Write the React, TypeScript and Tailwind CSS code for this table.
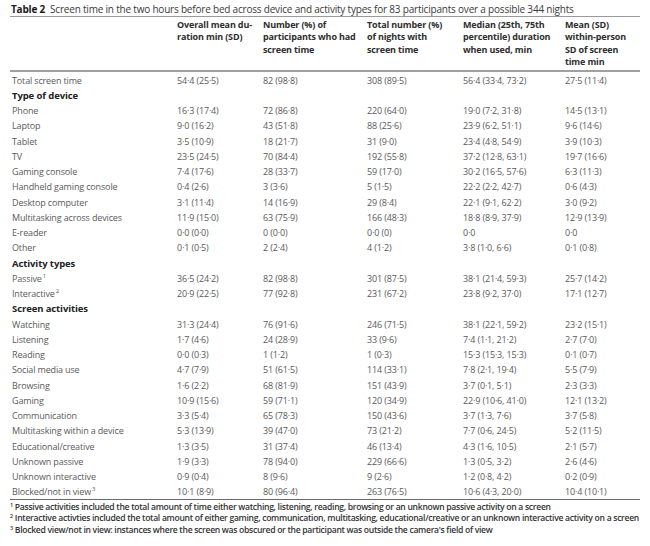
import React from 'react';

type Row =
  | { kind: 'section'; label: string }
  | { kind: 'data'; label: string; sup?: string; cells: string[] };

const rows: Row[] = [
  { kind: 'data', label: 'Total screen time', cells: ['54·4 (25·5)', '82 (98·8)', '308 (89·5)', '56·4 (33·4, 73·2)', '27·5 (11·4)'] },
  { kind: 'section', label: 'Type of device' },
  { kind: 'data', label: 'Phone', cells: ['16·3 (17·4)', '72 (86·8)', '220 (64·0)', '19·0 (7·2, 31·8)', '14·5 (13·1)'] },
  { kind: 'data', label: 'Laptop', cells: ['9·0 (16·2)', '43 (51·8)', '88 (25·6)', '23·9 (6·2, 51·1)', '9·6 (14·6)'] },
  { kind: 'data', label: 'Tablet', cells: ['3·5 (10·9)', '18 (21·7)', '31 (9·0)', '23·4 (4·8, 54·9)', '3·9 (10·3)'] },
  { kind: 'data', label: 'TV', cells: ['23·5 (24·5)', '70 (84·4)', '192 (55·8)', '37·2 (12·8, 63·1)', '19·7 (16·6)'] },
  { kind: 'data', label: 'Gaming console', cells: ['7·4 (17·6)', '28 (33·7)', '59 (17·0)', '30·2 (16·5, 57·6)', '6·3 (11·3)'] },
  { kind: 'data', label: 'Handheld gaming console', cells: ['0·4 (2·6)', '3 (3·6)', '5 (1·5)', '22·2 (2·2, 42·7)', '0·6 (4·3)'] },
  { kind: 'data', label: 'Desktop computer', cells: ['3·1 (11·4)', '14 (16·9)', '29 (8·4)', '22·1 (9·1, 62·2)', '3·0 (9·2)'] },
  { kind: 'data', label: 'Multitasking across devices', cells: ['11·9 (15·0)', '63 (75·9)', '166 (48·3)', '18·8 (8·9, 37·9)', '12·9 (13·9)'] },
  { kind: 'data', label: 'E-reader', cells: ['0·0 (0·0)', '0 (0·0)', '0·0 (0)', '0·0', '0·0'] },
  { kind: 'data', label: 'Other', cells: ['0·1 (0·5)', '2 (2·4)', '4 (1·2)', '3·8 (1·0, 6·6)', '0·1 (0·8)'] },
  { kind: 'section', label: 'Activity types' },
  { kind: 'data', label: 'Passive', sup: '1', cells: ['36·5 (24·2)', '82 (98·8)', '301 (87·5)', '38·1 (21·4, 59·3)', '25·7 (14·2)'] },
  { kind: 'data', label: 'Interactive', sup: '2', cells: ['20·9 (22·5)', '77 (92·8)', '231 (67·2)', '23·8 (9·2, 37·0)', '17·1 (12·7)'] },
  { kind: 'section', label: 'Screen activities' },
  { kind: 'data', label: 'Watching', cells: ['31·3 (24·4)', '76 (91·6)', '246 (71·5)', '38·1 (22·1, 59·2)', '23·2 (15·1)'] },
  { kind: 'data', label: 'Listening', cells: ['1·7 (4·6)', '24 (28·9)', '33 (9·6)', '7·4 (1·1, 21·2)', '2·7 (7·0)'] },
  { kind: 'data', label: 'Reading', cells: ['0·0 (0·3)', '1 (1·2)', '1 (0·3)', '15·3 (15·3, 15·3)', '0·1 (0·7)'] },
  { kind: 'data', label: 'Social media use', cells: ['4·7 (7·9)', '51 (61·5)', '114 (33·1)', '7·8 (2·1, 19·4)', '5·5 (7·9)'] },
  { kind: 'data', label: 'Browsing', cells: ['1·6 (2·2)', '68 (81·9)', '151 (43·9)', '3·7 (0·1, 5·1)', '2·3 (3·3)'] },
  { kind: 'data', label: 'Gaming', cells: ['10·9 (15·6)', '59 (71·1)', '120 (34·9)', '22·9 (10·6, 41·0)', '12·1 (13·2)'] },
  { kind: 'data', label: 'Communication', cells: ['3·3 (5·4)', '65 (78·3)', '150 (43·6)', '3·7 (1·3, 7·6)', '3·7 (5·8)'] },
  { kind: 'data', label: 'Multitasking within a device', cells: ['5·3 (13·9)', '39 (47·0)', '73 (21·2)', '7·7 (0·6, 24·5)', '5·2 (11·5)'] },
  { kind: 'data', label: 'Educational/creative', cells: ['1·3 (3·5)', '31 (37·4)', '46 (13·4)', '4·3 (1·6, 10·5)', '2·1 (5·7)'] },
  { kind: 'data', label: 'Unknown passive', cells: ['1·9 (3·3)', '78 (94·0)', '229 (66·6)', '1·3 (0·5, 3·2)', '2·6 (4·6)'] },
  { kind: 'data', label: 'Unknown interactive', cells: ['0·9 (0·4)', '8 (9·6)', '9 (2·6)', '1·2 (0·8, 4·2)', '0·2 (0·9)'] },
  { kind: 'data', label: 'Blocked/not in view', sup: '3', cells: ['10·1 (8·9)', '80 (96·4)', '263 (76·5)', '10·6 (4·3, 20·0)', '10·4 (10·1)'] },
];

const headers: string[][] = [
  ['Overall mean du-', 'ration min (SD)'],
  ['Number (%) of', 'participants who had', 'screen time'],
  ['Total number (%)', 'of nights with', 'screen time'],
  ['Median (25th, 75th', 'percentile) duration', 'when used, min'],
  ['Mean (SD)', 'within-person', 'SD of screen', 'time min'],
];

const footnotes = [
  ['1', 'Passive activities included the total amount of time either watching, listening, reading, browsing or an unknown passive activity on a screen'],
  ['2', 'Interactive activties included the total amount of either gaming, communication, multitasking, educational/creative or an unknown interactive activity on a screen'],
  ['3', "Blocked view/not in view: instances where the screen was obscured or the participant was outside the camera's field of view"],
];

const grid = 'grid grid-cols-[167px_86px_104px_96px_102px_1fr]';

export default function App() {
  return (
    <div className="w-[650px] h-[546px] bg-white px-[10px] pt-[2px] font-['Open_Sans','Noto_Sans',sans-serif] overflow-hidden">
      <div className="pl-px h-[14px] leading-[14px] text-[10px] tracking-[-0.2px] text-[#3a3a3a] whitespace-nowrap">
        <span className="font-bold text-[#1a1a1a] mr-[5px]">Table 2</span>
        Screen time in the two hours before bed across device and activity types for 83 participants over a possible 344 nights
      </div>
      <div className="h-px bg-[#9a9a9a]" />

      {/* column headers */}
      <div className={`${grid} mt-[2px] pb-[1px]`}>
        <div />
        {headers.map((lines, i) => (
          <div key={i} className="text-[9px] leading-[12.4px] font-bold text-[#2e2e2e] tracking-[-0.15px] whitespace-nowrap">
            {lines.map((l, j) => (
              <div key={j}>{l}</div>
            ))}
          </div>
        ))}
      </div>
      <div className="h-[2px] bg-[#a0a0a0]" />

      <div className="mt-[1px]">
        {rows.map((r, i) =>
          r.kind === 'section' ? (
            <div key={i} className="h-[15.25px] leading-[15.25px] pl-[2px] text-[9.5px] font-bold text-[#222] tracking-[-0.1px]">
              {r.label}
            </div>
          ) : (
            <div key={i} className={`${grid} h-[15.25px] leading-[15.25px] text-[9px] text-[#5a5a5a] tracking-[-0.15px] whitespace-nowrap`}>
              <div className="pl-[2px]">
                {r.label}
                {r.sup && <sup className="text-[6px] ml-px -top-[4px]">{r.sup}</sup>}
              </div>
              {r.cells.map((c, j) => (
                <div key={j}>{c}</div>
              ))}
            </div>
          )
        )}
      </div>
      <div className="h-px bg-[#6a6a6a] -mt-[1px]" />

      <div className="mt-[2px] text-[8.6px] leading-[11.6px] font-semibold text-[#333] tracking-[-0.3px] whitespace-nowrap">
        {footnotes.map(([n, t]) => (
          <div key={n}>
            <sup className="text-[5.5px] mr-[2px] -top-[3px]">{n}</sup>
            {t}
          </div>
        ))}
      </div>
    </div>
  );
}
